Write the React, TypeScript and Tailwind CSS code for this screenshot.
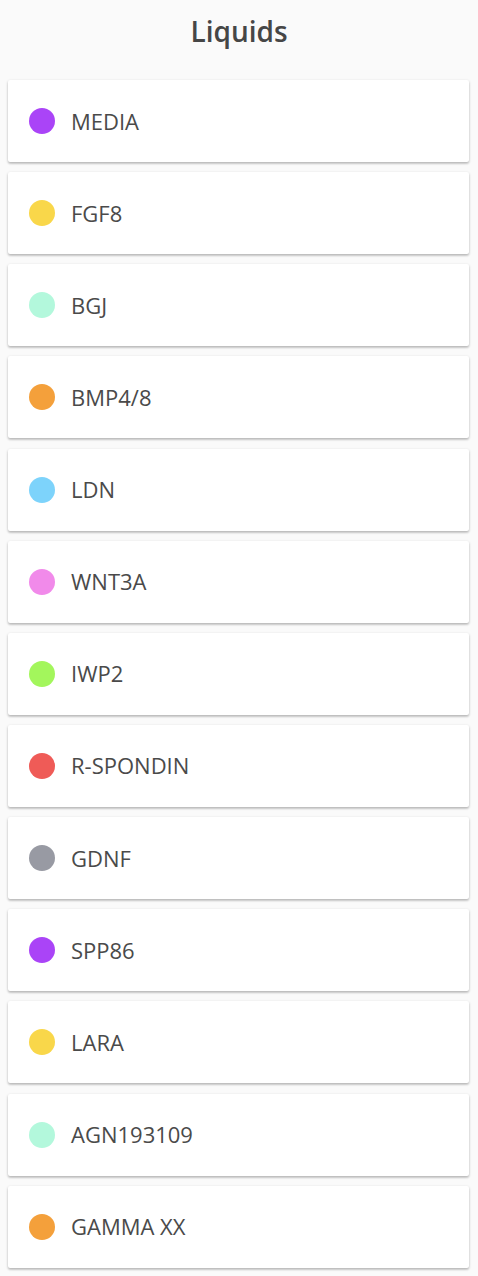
const liquids = [
  { name: "MEDIA", color: "bg-[#aa44f7]" },
  { name: "FGF8", color: "bg-[#f9d74a]" },
  { name: "BGJ", color: "bg-[#b3f8dc]" },
  { name: "BMP4/8", color: "bg-[#f4a03b]" },
  { name: "LDN", color: "bg-[#7dd3fb]" },
  { name: "WNT3A", color: "bg-[#f18aea]" },
  { name: "IWP2", color: "bg-[#a3f65c]" },
  { name: "R-SPONDIN", color: "bg-[#ef5b57]" },
  { name: "GDNF", color: "bg-[#989aa3]" },
  { name: "SPP86", color: "bg-[#aa44f7]" },
  { name: "LARA", color: "bg-[#f9d74a]" },
  { name: "AGN193109", color: "bg-[#b3f8dc]" },
  { name: "GAMMA XX", color: "bg-[#f4a03b]" },
];

export default function App() {
  return (
    <div
      className="min-h-screen bg-[#fafafa] pb-2"
      style={{ fontFamily: '"Open Sans", "Noto Sans", sans-serif' }}
    >
      {/* Título */}
      <h1 className="h-[62px] flex items-center justify-center text-[28px] font-semibold text-[#464646]">
        Liquids
      </h1>

      {/* Lista de líquidos */}
      <div className="flex flex-col gap-[10.15px] pl-2 pr-[9px] pt-[18px]">
        {liquids.map((l) => (
          <div
            key={l.name}
            className="h-[82px] bg-white rounded-[2px] flex items-center pl-[21px] gap-4 shadow-[0_1px_3px_rgba(0,0,0,0.2),0_2px_2px_rgba(0,0,0,0.12)]"
          >
            <span className={`w-[26px] h-[26px] rounded-full ${l.color}`} />
            <span className="text-[22px] text-[#4a4a4a]">{l.name}</span>
          </div>
        ))}
      </div>
    </div>
  );
}
